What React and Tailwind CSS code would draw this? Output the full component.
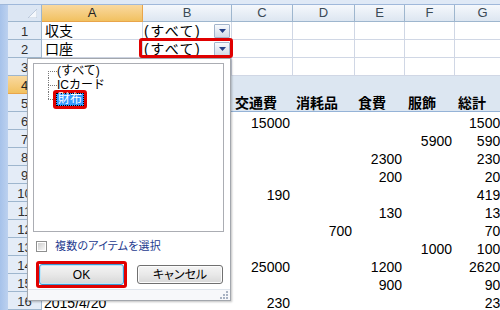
const FONT = "font-['Liberation_Sans','Noto_Sans_CJK_JP',sans-serif]";

const COLS = [
  { id: "A", w: "w-[101px]" },
  { id: "B", w: "w-[89px]" },
  { id: "C", w: "w-[61px]" },
  { id: "D", w: "w-[62px]" },
  { id: "E", w: "w-[50px]" },
  { id: "F", w: "w-[50px]" },
  { id: "G", w: "w-[56px]" },
];

const HEADINGS = { C: "交通費", D: "消耗品", E: "食費", F: "服飾", G: "総計" };

// pivot rows 6..16
const DATA = [
  { C: "15000", G: "15000" },
  { F: "5900", G: "5900" },
  { E: "2300", G: "2300" },
  { E: "200", G: "200" },
  { C: "190", G: "4190" },
  { E: "130", G: "130" },
  { D: "700", G: "700" },
  { F: "1000", G: "1000" },
  { C: "25000", E: "1200", G: "26200" },
  { E: "900", G: "900" },
  { A: "2015/4/20", C: "230", G: "230" },
];

function RowHead({ n, active }) {
  return (
    <div
      className={`w-[34px] shrink-0 h-full border-r border-b text-center text-[13px] leading-[16px] pt-[2px] ${
        active
          ? "bg-linear-to-b from-[#f9d99f] to-[#f1c15f] border-[#e9a54a] text-[#222]"
          : "bg-[#e4ecf7] border-[#9eb6ce] text-[#303030]"
      }`}
    >
      {n}
    </div>
  );
}

function FilterButton() {
  return (
    <div className="w-[16px] h-[14px] border border-[#a3b4cb] rounded-[1px] bg-linear-to-b from-[#f8fafd] to-[#d3dbe8] flex items-center justify-center">
      <svg width="7" height="4" viewBox="0 0 7 4">
        <path d="M0 0h7L3.5 4z" fill="#253f86" />
      </svg>
    </div>
  );
}

function HeaderRow() {
  return (
    <div className="flex h-[17px]">
      <div className="w-[34px] shrink-0 h-full bg-[#dce6f3] border-r border-b border-[#9eb6ce] flex items-end justify-end pr-[4px] pb-[3px]">
        <svg width="9" height="9" viewBox="0 0 9 9">
          <polygon points="9,0 9,9 0,9" fill="#f5f8fc" stroke="#b3c2d6" strokeWidth="0.8" />
        </svg>
      </div>
      {COLS.map((c) => (
        <div
          key={c.id}
          className={`${c.w} shrink-0 h-full border-r border-b flex items-center justify-center text-[13px] ${
            c.id === "A"
              ? "bg-linear-to-b from-[#f9d99f] to-[#f1c15f] border-[#e9a54a] text-[#222]"
              : "bg-linear-to-b from-[#f5f8fc] to-[#dde6f1] border-[#9eb6ce] text-[#3b4a56]"
          }`}
        >
          {c.id}
        </div>
      ))}
    </div>
  );
}

function TopRow({ n, a, filter }) {
  return (
    <div className="flex h-[18px]">
      <RowHead n={n} />
      {COLS.map((c) => {
        if (c.id === "A")
          return (
            <div key={c.id} className={`${c.w} shrink-0 h-full border-r border-b border-[#d0d7e5] pl-[3px] text-[14px] leading-[16px] pt-[1px]`}>
              {a}
            </div>
          );
        if (c.id === "B" && filter)
          return (
            <div key={c.id} className={`${c.w} shrink-0 h-full border-r border-b border-[#d0d7e5] flex items-center justify-between pl-[1px] pr-[1px]`}>
              <span className="text-[14px] leading-[16px] tracking-[1.5px]">(すべて)</span>
              <FilterButton />
            </div>
          );
        return <div key={c.id} className={`${c.w} shrink-0 h-full border-r border-b border-[#d0d7e5]`} />;
      })}
    </div>
  );
}

function PivotHeadRow({ n, active, labels }) {
  return (
    <div className="flex h-[18px]">
      <RowHead n={n} active={active} />
      {COLS.map((c) => (
        <div
          key={c.id}
          className={`${c.w} shrink-0 h-full bg-[#dce6f1] pl-[3px] text-[14px] font-bold leading-[16px] pt-[1px] ${
            labels ? "border-b border-[#95b3d7]" : ""
          }`}
        >
          {labels ? HEADINGS[c.id] : null}
        </div>
      ))}
    </div>
  );
}

function DataRow({ n, row }) {
  return (
    <div className="flex h-[18px]">
      <RowHead n={n} />
      {COLS.map((c) => (
        <div
          key={c.id}
          className={`${c.w} shrink-0 h-full text-[14px] leading-[16px] pt-[3px] text-black ${
            c.id === "A" ? "pl-[2px]" : "text-right pr-[3px]"
          }`}
        >
          {row[c.id]}
        </div>
      ))}
    </div>
  );
}

function TreeItem({ first, last, children }) {
  return (
    <div className="flex h-[14px] items-center">
      <div className="w-[14px] shrink-0" />
      <div className="w-[9px] shrink-0 h-full flex flex-col">
        <div className={`h-1/2 ${first ? "" : "border-l border-dotted border-[#7a7a7a]"}`} />
        <div className={`h-1/2 border-t border-dotted border-[#7a7a7a] ${last ? "" : "border-l"}`} />
      </div>
      {children}
    </div>
  );
}

function FilterPanel() {
  return (
    <div className="absolute left-[27px] top-[58px] w-[204px] h-[243px] border border-[#a3a7ad] bg-white shadow-[1px_1px_2px_rgba(0,0,0,0.25)] flex flex-col">
      <div className="pt-[4px] pl-[5px]">
        <div className="w-[191px] h-[169px] border border-[#abadb3] bg-white text-[12px] text-black">
          <TreeItem first>
            <span className="leading-[14px]">(すべて)</span>
          </TreeItem>
          <TreeItem>
            <span className="leading-[14px]">ICカード</span>
          </TreeItem>
          <TreeItem last>
            <div className="-ml-[4px] border-[3px] border-[#e00000] rounded-[3px] flex">
              <span className="w-[28px] h-[13px] bg-[#3399ff] text-white border border-dotted border-black leading-[11px] text-center">
                財布
              </span>
            </div>
          </TreeItem>
        </div>
      </div>

      <div className="mt-[4px] h-[20px] flex items-center pl-[8px] gap-[8px]">
        <div className="w-[11px] h-[11px] border border-[#8e8f8f] p-[1px] bg-white">
          <div className="w-full h-full bg-linear-to-br from-[#cfcfcf] to-[#f7f7f7]" />
        </div>
        <span className="text-[11px] tracking-[0.2px] text-[#1e3b8f] [font-feature-settings:'palt']">複数のアイテムを選択</span>
      </div>

      <div className="mt-[5px] flex items-center justify-between pl-[8px] pr-[7px]">
        <div className="border-[3px] border-[#e00000] rounded-[3px]">
          <button className="w-[85px] h-[21px] rounded-[3px] border border-[#3d9ad3] bg-linear-to-b from-[#f4f4f4] via-[#e8e8e8] to-[#d7d7d7] shadow-[inset_0_0_0_1px_#bfe6f8] text-[12px] text-black flex items-center justify-center">
            OK
          </button>
        </div>
        <button className="w-[86px] h-[19px] rounded-[3px] border border-[#707070] bg-linear-to-b from-[#f4f4f4] via-[#e9e9e9] to-[#d8d8d8] shadow-[inset_0_0_0_1px_#fcfcfc] text-[12px] text-black [font-feature-settings:'palt'] flex items-center justify-center">
          キャンセル
        </button>
      </div>

      <div className="mt-[1px] flex-1 border-t border-[#dfe5ec] bg-[#f7f8fa] flex justify-end items-end pr-[2px] pb-[1px]">
        <svg width="8" height="8" viewBox="0 0 8 8">
          <rect x="6" y="0" width="2" height="2" fill="#a8b2c2" />
          <rect x="3" y="3" width="2" height="2" fill="#a8b2c2" />
          <rect x="6" y="3" width="2" height="2" fill="#a8b2c2" />
          <rect x="0" y="6" width="2" height="2" fill="#a8b2c2" />
          <rect x="3" y="6" width="2" height="2" fill="#a8b2c2" />
          <rect x="6" y="6" width="2" height="2" fill="#a8b2c2" />
        </svg>
      </div>
    </div>
  );
}

export default function App() {
  return (
    <div className={`relative w-[500px] h-[310px] overflow-hidden bg-white ${FONT}`}>
      <div className="h-[5px] bg-[#dfe9f6] border-b border-[#9fb8da]" />
      <div className="flex">
        <div className="w-[8px] shrink-0 h-[305px] bg-linear-to-r from-[#a6c2ea] to-[#bcd1ef]" />
        <div className="flex flex-col shrink-0">
          <HeaderRow />
          <TopRow n={1} a="収支" filter />
          <TopRow n={2} a="口座" filter />
          <TopRow n={3} />
          <PivotHeadRow n={4} active />
          <PivotHeadRow n={5} labels />
          {DATA.map((row, i) => (
            <DataRow key={i} n={i + 6} row={row} />
          ))}
        </div>
      </div>

      {/* red markers */}
      <div className="absolute left-[139px] top-[38px] w-[94px] h-[20px] border-[3px] border-[#e00000] rounded-[3px]" />

      <FilterPanel />
    </div>
  );
}
